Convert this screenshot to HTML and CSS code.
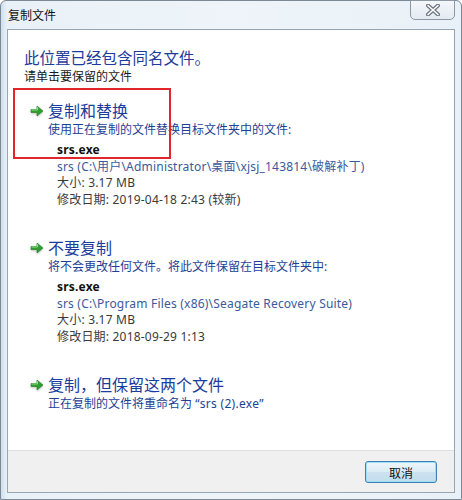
FILE: index.html
```html
<!DOCTYPE html>
<html lang="zh-CN">
<head>
    <meta charset="UTF-8">
    <title>复制文件</title>
    <link rel="stylesheet" href="styles.css">
</head>
<body>
    <div class="window">
        <div class="titlebar">
            <span class="title">复制文件</span>
            <div class="close-btn">
                <svg width="16" height="12" viewBox="0 0 16 12">
                    <path d="M3 1.5 L13 10.5 M13 1.5 L3 10.5" stroke="#6d7580" stroke-width="4" stroke-linecap="round"/>
                    <path d="M3 1.5 L13 10.5 M13 1.5 L3 10.5" stroke="#ffffff" stroke-width="1.6" stroke-linecap="round"/>
                </svg>
            </div>
        </div>
        <div class="panel">
            <div class="content">
                <h1 class="main-title">此位置已经包含同名文件。</h1>
                <div class="hint">请单击要保留的文件</div>

                <div class="option first">
                    <div class="option-title">
                        <svg class="arrow" width="14" height="14" viewBox="0 0 14 14">
                            <path d="M1 5.5 H7 V2 L13 7 L7 12 V8.5 H1 Z" fill="#2f9e2f" stroke="#1f7a1f" stroke-width="0.6"/>
                            <path d="M1.5 6 H7.5 V3.2" fill="none" stroke="#8ee08e" stroke-width="1"/>
                        </svg>
                        <span>复制和替换</span>
                    </div>
                    <div class="option-desc">使用正在复制的文件替换目标文件夹中的文件:</div>
                    <div class="details">
                        <div class="file-name">srs.exe</div>
                        <div class="file-path">srs (C:\用户\Administrator\桌面\xjsj_143814\破解补丁)</div>
                        <div>大小: 3.17 MB</div>
                        <div>修改日期: 2019-04-18 2:43 (较新)</div>
                    </div>
                </div>

                <div class="option">
                    <div class="option-title">
                        <svg class="arrow" width="14" height="14" viewBox="0 0 14 14">
                            <path d="M1 5.5 H7 V2 L13 7 L7 12 V8.5 H1 Z" fill="#2f9e2f" stroke="#1f7a1f" stroke-width="0.6"/>
                            <path d="M1.5 6 H7.5 V3.2" fill="none" stroke="#8ee08e" stroke-width="1"/>
                        </svg>
                        <span>不要复制</span>
                    </div>
                    <div class="option-desc">将不会更改任何文件。将此文件保留在目标文件夹中:</div>
                    <div class="details">
                        <div class="file-name">srs.exe</div>
                        <div class="file-path">srs (C:\Program Files (x86)\Seagate Recovery Suite)</div>
                        <div>大小: 3.17 MB</div>
                        <div>修改日期: 2018-09-29 1:13</div>
                    </div>
                </div>

                <div class="option">
                    <div class="option-title">
                        <svg class="arrow" width="14" height="14" viewBox="0 0 14 14">
                            <path d="M1 5.5 H7 V2 L13 7 L7 12 V8.5 H1 Z" fill="#2f9e2f" stroke="#1f7a1f" stroke-width="0.6"/>
                            <path d="M1.5 6 H7.5 V3.2" fill="none" stroke="#8ee08e" stroke-width="1"/>
                        </svg>
                        <span>复制，但保留这两个文件</span>
                    </div>
                    <div class="option-desc">正在复制的文件将重命名为 <span class="latin">“srs (2).exe”</span></div>
                </div>

                <div class="highlight-box"></div>
            </div>
            <div class="footer">
                <button class="cancel-btn">取消</button>
            </div>
        </div>
    </div>
</body>
</html>
```

FILE: styles.css
```css
body {
    margin: 0;
    font-family: "Noto Sans", "Noto Sans CJK SC", sans-serif;
    font-size: 12px;
    color: #222;
    background: #fff;
}
.window {
    position: relative;
    box-sizing: border-box;
    width: 462px;
    height: 500px;
    display: flex;
    flex-direction: column;
    border: 1px solid #7c8894;
    border-radius: 6px 6px 0 0;
    background: linear-gradient(90deg, #cfdfee 0, #e9f1f8 6px, #eef4f9 50%, #e9f1f8 100%);
}
.titlebar {
    height: 28px;
    display: flex;
    align-items: center;
    padding-left: 7px;
}
.title {
    font-size: 12px;
    color: #111;
    padding-bottom: 1px;
}
.close-btn {
    position: absolute;
    top: -1px;
    right: 6px;
    width: 45px;
    height: 20px;
    box-sizing: border-box;
    border: 1px solid #8d98a4;
    border-radius: 0 0 5px 5px;
    background: linear-gradient(#f4f7fa, #e3eaf1);
    display: flex;
    align-items: center;
    justify-content: center;
}
.panel {
    flex: 1;
    margin: 0 6px 6px 6px;
    border: 1px solid #97a4b1;
    background: #fff;
    display: flex;
    flex-direction: column;
}
.content {
    position: relative;
    flex: 1;
    padding: 18px 16px 0 16px;
}
.main-title {
    margin: 0;
    font-size: 15.5px;
    font-weight: normal;
    line-height: 20px;
    color: #1d3b99;
}
.hint {
    line-height: 18px;
    color: #1a1a1a;
}
.option {
    margin: 30px 0 0 6px;
}
.option.first {
    margin-top: 15px;
}
.option-title {
    display: flex;
    align-items: center;
    height: 20px;
    line-height: 20px;
    font-size: 16px;
    color: #1b3c9c;
}
.arrow {
    width: 14px;
    margin-right: 4px;
    filter: drop-shadow(0 1px 1px rgba(0,0,0,0.25));
}
.option-desc {
    padding-left: 18px;
    line-height: 18px;
    color: #1d3f95;
}
.latin {
    letter-spacing: 0.3px;
}
.details {
    padding-left: 27px;
    margin-top: 3px;
    line-height: 16.5px;
    color: #3a3a3a;
    letter-spacing: 0.2px;
}
.file-name {
    font-weight: bold;
    color: #111;
}
.file-path {
    color: #3b5a9c;
}
.highlight-box {
    position: absolute;
    left: 5px;
    top: 58px;
    width: 158px;
    height: 71px;
    box-sizing: border-box;
    border: 2px solid #e3262b;
}
.footer {
    height: 42px;
    box-sizing: border-box;
    border-top: 1px solid #dfdfdf;
    background: #f0f0f0;
    display: flex;
    justify-content: flex-end;
    padding: 10px 17px 0 0;
}
.cancel-btn {
    width: 72px;
    height: 22px;
    font-family: "Noto Sans CJK SC", sans-serif;
    font-size: 12px;
    color: #111;
    border: 1px solid #3c7fb1;
    border-radius: 3px;
    background: linear-gradient(#eef6fb, #dcebf5 50%, #cde2f0 50%, #c2dcee);
    box-shadow: inset 0 0 0 1px #9fe0f8;
    padding: 0;
}
```
